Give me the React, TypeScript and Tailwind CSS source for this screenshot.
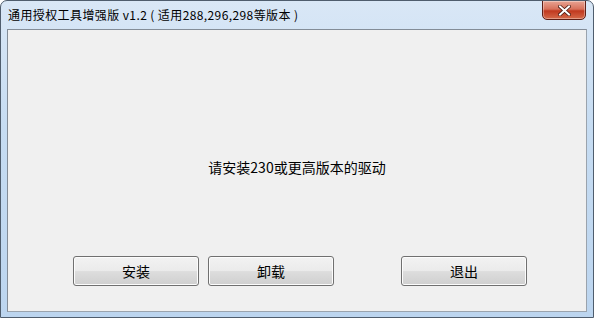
import React from 'react'

const font = { fontFamily: '"Noto Sans CJK SC", "Liberation Sans", sans-serif' }

function Win7Button({ label, className = '' }: { label: string; className?: string }) {
  return (
    <button
      className={`h-[30px] w-[126px] rounded-[3px] border border-[#707070] bg-[linear-gradient(to_bottom,#f2f2f2_0%,#ebebeb_48%,#dddddd_52%,#cfcfcf_100%)] text-[14px] text-black shadow-[inset_0_0_0_1px_#fcfcfc] ${className}`}
    >
      {label}
    </button>
  )
}

export default function App() {
  return (
    <div
      style={font}
      className="flex h-[318px] w-[594px] flex-col overflow-hidden rounded-t-[7px] border border-[#4f5d6d] bg-[linear-gradient(to_bottom,#d9e7f6_0%,#c6dcf2_40%,#bcd5ef_100%)]"
    >
      {/* Title bar */}
      <div className="relative flex h-[28px] shrink-0 items-center pl-[7px]">
        <span className="text-[12px] leading-none tracking-[0.4px] text-black">
          通用授权工具增强版 v1.2 ( 适用288,296,298等版本 )
        </span>
        <div className="absolute right-[7px] top-[-1px] flex h-[20px] w-[44px] items-center justify-center rounded-b-[5px] border border-[#5e1f16] bg-[linear-gradient(to_bottom,#e8a493_0%,#d7715b_45%,#c0391f_55%,#d56a4a_100%)] shadow-[inset_0_0_0_1px_rgba(255,255,255,0.35)]">
          <svg width="13" height="11" viewBox="0 0 13 11">
            <path
              d="M2 1.5 L11 9.5 M11 1.5 L2 9.5"
              stroke="#4a1b12"
              strokeWidth="3.6"
              strokeLinecap="square"
            />
            <path
              d="M2 1.5 L11 9.5 M11 1.5 L2 9.5"
              stroke="#ffffff"
              strokeWidth="2"
              strokeLinecap="square"
            />
          </svg>
        </div>
      </div>

      {/* Client area */}
      <div className="mx-[6px] mb-[5px] flex flex-1 flex-col border border-t-[#838c97] border-l-[#838c97] border-r-[#9aa3ad] border-b-[#9aa3ad] bg-[#f0f0f0]">
        <div className="flex flex-1 items-center justify-center pt-[48px] text-[14px] text-black">
          请安装230或更高版本的驱动
        </div>
        <div className="flex items-center pb-[25px] pl-[65px]">
          <Win7Button label="安装" />
          <Win7Button label="卸载" className="ml-[9px]" />
          <Win7Button label="退出" className="ml-[67px]" />
        </div>
      </div>
    </div>
  )
}
